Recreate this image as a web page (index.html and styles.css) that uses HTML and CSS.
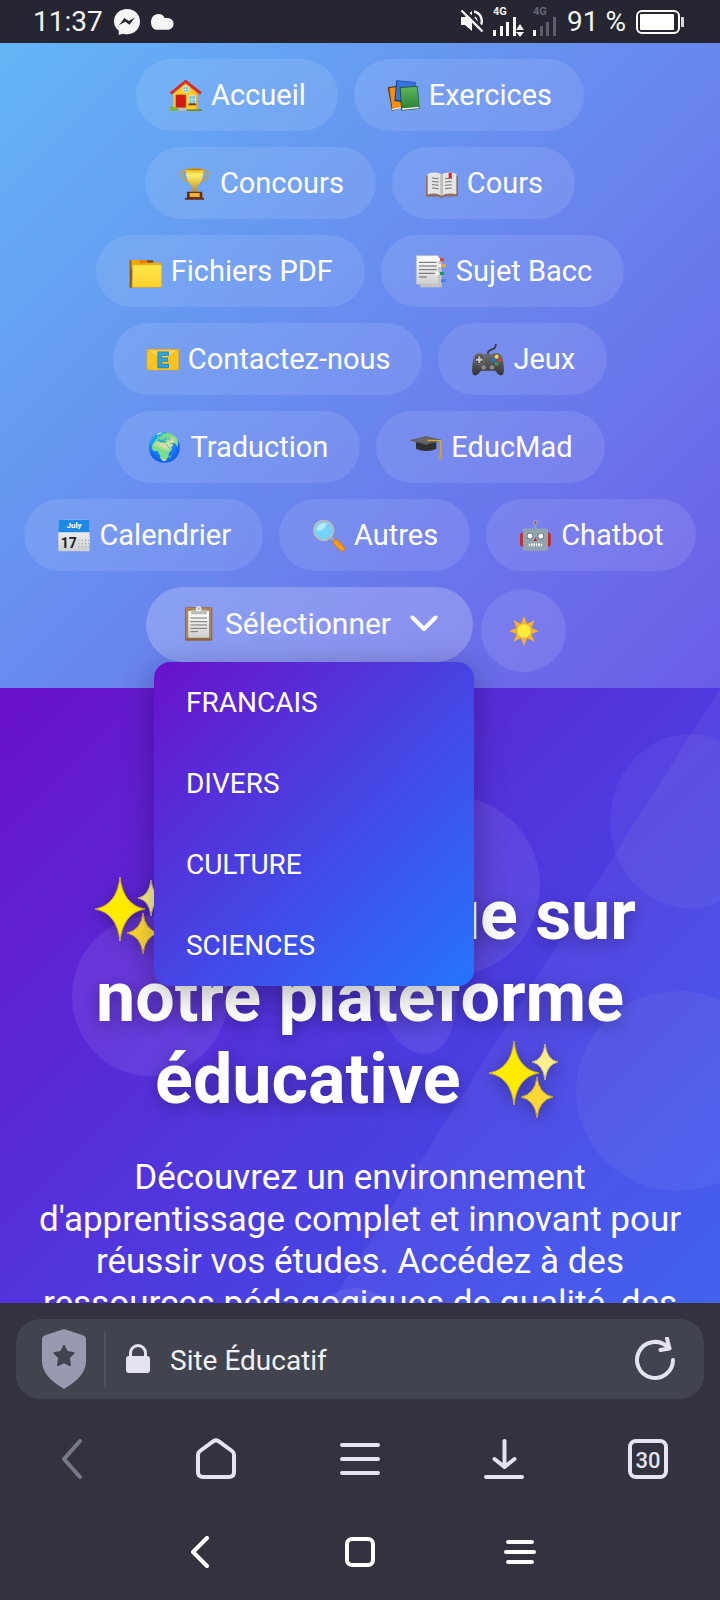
FILE: index.html
```html
<!DOCTYPE html>
<html lang="fr">
<head>
<meta charset="utf-8">
<meta name="viewport" content="width=device-width, initial-scale=1">
<title>Site Éducatif</title>
<link rel="stylesheet" href="styles.css">
</head>
<body>
<svg class="defs" width="0" height="0" aria-hidden="true">
  <defs>
    <linearGradient id="gold" x2="0" y2="1"><stop stop-color="#e3a81c"/><stop offset=".3" stop-color="#fff06a"/><stop offset="1" stop-color="#c98912"/></linearGradient>
    <linearGradient id="folder" x2="0" y2="1"><stop stop-color="#ffe94a"/><stop offset="1" stop-color="#fdd02f"/></linearGradient>
    <linearGradient id="paper" x2="0" y2="1"><stop stop-color="#fff"/><stop offset="1" stop-color="#cfcfcf"/></linearGradient>
    <linearGradient id="green" x2="0" y2="1"><stop stop-color="#5fb762"/><stop offset="1" stop-color="#2c8433"/></linearGradient>
    <linearGradient id="pad" x2="0" y2="1"><stop stop-color="#707070"/><stop offset="1" stop-color="#333"/></linearGradient>
    <g id="sparkles">
      <path fill="#ffeb00" stroke="#c9b117" stroke-width="1" d="M36 3Q39 31 61 35 39 39 36 67 33 39 11 35 33 31 36 3z"/>
      <path fill="#fdf08c" stroke="#c9b76f" stroke-width="1" d="M67 6Q69 22 80 24 69 26 67 42 65 26 54 24 65 22 67 6z"/>
      <path fill="#fdd835" stroke="#c99f2a" stroke-width="1" d="M59 39Q61 56 75 59 61 62 59 80 57 62 43 59 57 56 59 39z"/>
    </g>
  </defs>
</svg>
<div class="status">
  <div class="status-group">
    <span class="clock">11:37</span>
    <svg width="26" height="26" viewBox="0 0 26 26" aria-hidden="true"><path fill="#f5f5f5" d="M13 0C5.600 0 0 5.300 0 12.500c0 3.700 1.800 7 4.800 9.200V26l4.300-1.300c1.200.4 2.600.6 3.900.6 7.400 0 13-5.600 13-12.800S20.400 0 13 0z"/><path fill="#252632" d="M5 16l5.500-7 4.200 3 6.300-3.500-5.500 7.200-4.200-3z"/></svg>
    <svg width="24" height="16" viewBox="0 0 24 16" aria-hidden="true"><path fill="#f5f5f5" d="M7.500 0c3 0 5 1.400 6.200 4h2.200c4 0 6.600 2.300 6.600 5.800 0 3.500-2.500 6-6 6H6.200C2.600 15.800 0 13 0 8 0 3.600 3 0 7.500 0z"/></svg>
  </div>
  <div class="status-group status-right">
    <svg width="25" height="25" viewBox="0 0 25 25" aria-hidden="true"><path fill="#f5f5f5" d="M1 8h4l7-6v20l-7-6H1z"/><path fill="none" stroke="#f5f5f5" stroke-width="2.400" d="M14 2.500a9.500 9.500 0 0 1 5 16M14.500 8.500a4.500 4.500 0 0 1 1.500 6"/><path stroke="#252632" stroke-width="3" d="M3.500 0l21 21"/><path stroke="#f5f5f5" stroke-width="2.400" d="M1.500 1.500l21 21"/></svg>
    <svg width="32" height="32" viewBox="0 0 32 32" aria-hidden="true"><text class="net" x="0" y="9" fill="#f5f5f5">4G</text><g fill="#f5f5f5"><rect y="24" width="3" height="6"/><rect x="7" y="20" width="3" height="10"/><rect x="13" y="16" width="3" height="14"/><rect x="20" y="11" width="3" height="19"/><path d="M27 18l4 6h-8zM27 31l4-5h-8z"/></g></svg>
    <svg width="24" height="32" viewBox="0 0 24 32" aria-hidden="true"><text class="net" x="0" y="9" fill="#666773">4G</text><rect y="24" width="3" height="6" fill="#f5f5f5"/><g fill="#5d5e69"><rect x="7" y="20" width="3" height="10"/><rect x="13" y="16" width="3" height="14"/><rect x="20" y="11" width="3" height="19"/></g></svg>
    <span class="battery-text">91 %</span>
    <svg width="48" height="24" viewBox="0 0 48 24" aria-hidden="true"><rect x="1" y="1" width="42" height="22" rx="5" fill="none" stroke="#fff" stroke-width="2"/><rect x="4" y="4" width="34" height="16" rx="1" fill="#fff"/><path fill="#d8d8dc" d="M45 7h3v10h-3z"/></svg>
  </div>
</div>

<div class="page">
  <header class="header">
    <nav class="menu">
      <a class="pill" href="#"><svg class="icon" viewBox="0 0 105 99" aria-hidden="true"><path fill="#ffc928" d="M53 10l37 34v50H16V44z"/><path fill="#f9a825" d="M53 10l37 34v50h-6V44L53 16z"/><path fill="none" stroke="#d32f2f" stroke-width="9" stroke-linejoin="round" d="M8 44L53 7l46 37"/><path fill="#5fc3ea" stroke="#e8f5f8" stroke-width="2" d="M45 23h17v16H45zM63 50h19v25H63z"/><path stroke="#e8f5f8" stroke-width="2" d="M53 23v16M45 31h17M72 50v25M63 62h19"/><path fill="#6d3b23" d="M62 73h22v6H62z"/><path fill="#d51919" stroke="#a83214" stroke-width="2" d="M24 48h29v38H24z"/><path fill="#bbb" d="M28 86h26l6 9H28z"/><path fill="#6b8e23" d="M56 91h46v5H56z"/><path fill="#7cb342" d="M6 96V84q8-6 13 0 12-2 13 12z"/></svg>Accueil</a>
      <a class="pill" href="#"><svg class="icon" viewBox="0 0 105 99" aria-hidden="true"><path fill="#5a3a1c" d="M5 25l35-6 9 67-31 10z"/><path fill="#f98c0a" d="M10 28l27-5 9 60-27 6z"/><path fill="#eee" d="M18 89l27-6v5l-26 6z"/><path fill="#1b3a77" d="M31 4l58 5-6 65-58-8z"/><path fill="#3573dc" d="M34 5l53 5-6 59-53-7z"/><path fill="#1f5228" d="M41 25l54-4 6 68-55 6z"/><path fill="url(#green)" d="M44 27l49-4 6 60-51 5z"/><path fill="#e8eee8" d="M48 88l50-5 1 5-50 5z"/></svg>Exercices</a>
      <a class="pill" href="#"><svg class="icon" viewBox="0 0 105 99" aria-hidden="true"><path fill="none" stroke="#d29b2a" stroke-width="5" d="M28 16Q10 8 12 22q3 18 28 22M77 16q18-8 16 6-3 18-28 22"/><path fill="url(#gold)" d="M26 6q27-5 54 0-1 39-21 52v16H46V58Q27 45 26 6z"/><ellipse cx="53" cy="7" rx="26" ry="3" fill="#b98518"/><path fill="#6b2d12" d="M30 74h46v18h5v6H24v-6h6z"/><path fill="#e9b92b" d="M38 78h30v12H38z"/></svg>Concours</a>
      <a class="pill" href="#"><svg class="icon" viewBox="0 0 105 99" aria-hidden="true"><path fill="#8d6e63" d="M6 26l46 6 50-6v62l-42 1-7 5-8-5H6z"/><path fill="#e4e4e4" d="M11 20q26-8 42 2 18-10 44-2v62q-27-6-44 4-17-10-42-4z"/><path fill="#bdbdbd" d="M49 22l4 1 4-1v61l-4 3-4-3z"/><path stroke="#777" stroke-width="3" d="M24 33l20 2M24 43l20 2M24 53l20 2M24 63l20 2M63 35l20-2M63 45l20-2M63 55l20-2M63 65l20-2"/><path fill="#e51c23" d="M74 17h9v20l-4-4-5 4z"/></svg>Cours</a>
      <a class="pill" href="#"><svg class="icon" viewBox="0 0 105 99" aria-hidden="true"><path fill="#8a5a12" d="M5 16h8v82l-8 1z"/><path fill="#f2a900" d="M10 15h60l6 8h25v20H10z"/><path fill="#e87916" d="M34 16h22v9H36z"/><path fill="#7b4b22" d="M56 16h19l2 7H58z"/><path fill="url(#folder)" stroke="#d9a11c" stroke-width="2" d="M14 32q0-3 3-3h81q3 0 3 3v62q0 3-3 3H12z"/></svg>Fichiers PDF</a>
      <a class="pill" href="#"><svg class="icon" viewBox="0 0 105 99" aria-hidden="true"><path fill="#c4c4c4" d="M22 12h64v85H22z"/><path fill="url(#paper)" stroke="#bbb" stroke-width="2" d="M10 2h67v86H10z"/><path stroke="#666" stroke-width="3" d="M18 22h53M18 33h53M18 44h53M18 55h50M18 66h24"/><path fill="#fff" d="M66 9h16v10H66zM76 28h10v8H76zM66 51h14v9H66z"/><path fill="#db4437" d="M81 9h12v10H81z"/><path fill="#e0ad22" d="M84 27h15v9H84z"/><path fill="#0f9d58" d="M80 51h13v9H80z"/><path fill="#4285f4" d="M84 73h15v9H84z"/></svg>Sujet Bacc</a>
      <a class="pill" href="#"><svg class="icon" viewBox="0 0 105 99" aria-hidden="true"><rect x="6" y="19" width="95" height="62" rx="2" fill="#ffc51f" stroke="#d9a11c" stroke-width="2"/><path fill="#ffd54a" stroke="#e0a31a" stroke-width="2" d="M7 20l46 37 47-37zM7 80l34-32M100 80L65 48"/><path fill="none" stroke="#1976a8" stroke-width="13" d="M72 32H44v37h28M44 50h25"/><path fill="none" stroke="#2fa4dc" stroke-width="9" d="M71 32H44v37h27M44 50h24"/></svg>Contactez-nous</a>
      <a class="pill" href="#"><svg class="icon" viewBox="0 0 105 99" aria-hidden="true"><path fill="none" stroke="#3a3a3f" stroke-width="5" d="M54 36q-3-13 12-17 12-3 12-17"/><path fill="url(#pad)" d="M22 31q10-3 18 2h28q8-5 18-2 12 3 15 35 3 31-7 31-9 0-18-14H33Q23 97 14 97 4 97 7 66q3-32 15-35z"/><circle cx="28" cy="50" r="15" fill="#4a4a4a" stroke="#888" stroke-width="2"/><path stroke="#c8c8c8" stroke-width="6" d="M28 40v20M18 50h20"/><circle cx="41" cy="73" r="8" fill="#8a8a8a" stroke="#444" stroke-width="2"/><circle cx="66" cy="73" r="8" fill="#8a8a8a" stroke="#444" stroke-width="2"/><circle cx="80" cy="41" r="6" fill="#ffd54f"/><circle cx="70" cy="52" r="6" fill="#1e78c8"/><circle cx="90" cy="51" r="6" fill="#d63a3a"/><circle cx="80" cy="62" r="6" fill="#2e9b45"/></svg>Jeux</a>
      <a class="pill" href="#"><span class="emoji">🌍</span>Traduction</a>
      <a class="pill" href="#"><svg class="icon" viewBox="0 0 105 99" aria-hidden="true"><path fill="#303030" d="M24 34h61v20q-30 12-61 0z"/><path fill="#4c4c4c" d="M6 28l48-12 47 11-46 16z"/><path fill="#666" d="M6 28l48-12 47 11-46 12z"/><path fill="none" stroke="#e0a52c" stroke-width="4" d="M58 28l40 1v40"/><path fill="#d49a22" d="M95 62h6v23h-9z"/></svg>EducMad</a>
      <a class="pill" href="#"><svg class="icon" viewBox="0 0 105 99" aria-hidden="true"><rect x="7" y="2" width="94" height="95" rx="4" fill="url(#paper)"/><path fill="#1e88e5" d="M7 5q0-3 3-3h88q3 0 3 3v35H7z"/><text class="month" x="54" y="28">July</text><text class="day" x="38" y="87">17</text><path fill="none" stroke="#888" stroke-width="3" stroke-dasharray="3 7" d="M67 64h32M67 74h32M67 84h32"/></svg>Calendrier</a>
      <a class="pill" href="#"><svg class="icon" viewBox="0 0 105 99" aria-hidden="true"><path stroke="#a8a8a8" stroke-width="8" d="M60 56l12 11"/><path stroke="#d97a08" stroke-width="17" stroke-linecap="round" d="M74 69l19 20"/><path stroke="#ff9d12" stroke-width="12" stroke-linecap="round" d="M74 69l19 20"/><circle cx="38" cy="34" r="29" fill="#74d3fb" stroke="#b4bcc0" stroke-width="6"/><path fill="#b5e8ff" d="M17 35a22 22 0 0 1 30-22Q40 38 17 35z"/></svg>Autres</a>
      <a class="pill" href="#"><span class="emoji">🤖</span>Chatbot</a>
      <div class="tools">
        <div class="picker">
          <button class="picker-button" type="button" aria-expanded="true"><svg width="37" height="35" viewBox="0 0 111 105" aria-hidden="true"><rect x="15" y="4" width="82" height="100" rx="4" fill="#8d6540"/><rect x="18" y="5" width="76" height="92" rx="3" fill="#b18552"/><path fill="url(#paper)" d="M25 15h62v80H25z"/><path fill="#bdbdbd" d="M33 12h12l4-6q7-9 14 0l4 6h14v13H33z"/><circle cx="56" cy="8" r="6" fill="none" stroke="#eee" stroke-width="4"/><path stroke="#777" stroke-width="3" d="M31 36h50M31 47h50M31 57h50M31 67h50M31 77h23"/></svg>Sélectionner<svg class="chevron" width="28" height="17" viewBox="0 0 28 17" aria-hidden="true"><path fill="none" stroke="#fff" stroke-width="4" stroke-linecap="round" stroke-linejoin="round" d="M2.500 2.500L14 14 25.500 2.500"/></svg></button>
          <div class="dropdown">
            <a class="dropdown-item" href="#">FRANCAIS</a>
            <a class="dropdown-item" href="#">DIVERS</a>
            <a class="dropdown-item" href="#">CULTURE</a>
            <a class="dropdown-item" href="#">SCIENCES</a>
          </div>
        </div>
        <button class="theme" type="button" aria-label="Thème"><svg width="30" height="30" viewBox="-45 -45 90 90"><path fill="#f4b02e" d="M0-45L9-22 32-32 22-9 45 0 22 9 32 32 9 22 0 45-9 22-32 32-22 9-45 0-22-9-32-32-9-22z"/><circle r="21" fill="#ffeb3b" stroke="#f6b62c" stroke-width="2"/></svg></button>
      </div>
    </nav>
  </header>
  <main class="hero">
    <svg class="shapes" viewBox="0 0 720 615" preserveAspectRatio="xMidYMin slice" aria-hidden="true">
      <g fill="#fff" fill-opacity=".05"><path d="M720 0L331 615h389z"/><ellipse cx="690" cy="133" rx="80" ry="87"/><ellipse cx="678" cy="403" rx="102" ry="100"/></g>
      <g fill="#fff" fill-opacity=".08"><circle cx="450" cy="198" r="90"/><ellipse cx="150" cy="308" rx="78" ry="80"/><path d="M405 240c-25 5-40 30-34 60 7 34 32 66 53 66 22 0 33-28 33-60s-18-73-52-66z"/><circle cx="355" cy="644" r="44"/></g>
    </svg>
    <h1 class="title"><svg class="sparkles" viewBox="0 0 87 82" aria-hidden="true"><use href="#sparkles"/></svg> Bienvenue sur notre plateforme éducative <svg class="sparkles" viewBox="0 0 87 82" aria-hidden="true"><use href="#sparkles"/></svg></h1>
    <p class="lead">Découvrez un environnement d'apprentissage complet et innovant pour réussir vos études. Accédez à des ressources pédagogiques de qualité, des</p>
  </main>
</div>

<footer class="browser">
  <div class="address">
    <button class="icon-button" type="button" aria-label="Protection"><svg width="44" height="60" viewBox="0 0 44 60"><path fill="#989baf" d="M22 0l19.500 6.500Q44 7.500 44 10v22c0 12-9 20-22 28C9 52 0 44 0 32V10q0-2.500 2.500-3.500z"/><path fill="#41434f" stroke="#41434f" stroke-width="2" stroke-linejoin="round" d="M22 17l3 6 6.500 1-4.700 4.700 1.200 7.300-6-3-6 3 1.200-7.300-4.700-4.700 6.500-1z"/></svg></button>
    <span class="divider"></span>
    <svg width="24" height="30" viewBox="0 0 24 30" aria-hidden="true"><rect y="12" width="24" height="17" rx="3" fill="#e3e4ef"/><path fill="none" stroke="#e3e4ef" stroke-width="3" d="M4.500 13V9a7.500 7.500 0 0 1 15 0v4"/></svg>
    <input class="url" type="text" value="Site Éducatif" aria-label="Adresse" readonly>
    <button class="icon-button" type="button" aria-label="Actualiser"><svg width="42" height="44" viewBox="0 0 42 44"><path fill="none" stroke="#e3e4ef" stroke-width="4" stroke-linecap="round" stroke-linejoin="round" d="M39 23A18 18 0 1 1 33 9.500L35.500 11M33 1.500l2.500 10-9 1.500"/></svg></button>
  </div>
  <div class="toolbar">
    <button class="icon-button" type="button" aria-label="Précédent"><svg width="20" height="40" viewBox="0 0 20 40"><path fill="none" stroke="#777989" stroke-width="4" stroke-linecap="round" stroke-linejoin="round" d="M18 2L2 20l16 18"/></svg></button>
    <button class="icon-button" type="button" aria-label="Accueil"><svg width="40" height="42" viewBox="0 0 40 42"><path fill="none" stroke="#e3e4ef" stroke-width="4" stroke-linejoin="round" d="M17.500 3.200q2.500-1.700 5 0L36 13q2 1.500 2 4v17q0 5-5 5H7q-5 0-5-5V17q0-2.500 2-4z"/></svg></button>
    <button class="icon-button" type="button" aria-label="Menu"><svg width="40" height="32" viewBox="0 0 40 32"><path stroke="#e3e4ef" stroke-width="4" stroke-linecap="round" d="M2 2h36M2 16h36M2 30h36"/></svg></button>
    <button class="icon-button" type="button" aria-label="Téléchargements"><svg width="40" height="40" viewBox="0 0 40 40"><path fill="none" stroke="#e3e4ef" stroke-width="4" stroke-linecap="round" stroke-linejoin="round" d="M20.500 2v26M10.500 20l10 8 10-8M2 38h36"/></svg></button>
    <button class="tabs" type="button" aria-label="Onglets">30</button>
  </div>
  <div class="system">
    <button class="icon-button" type="button" aria-label="Retour"><svg width="18" height="32" viewBox="0 0 18 32"><path fill="none" stroke="#fff" stroke-width="4" stroke-linecap="round" stroke-linejoin="round" d="M16 2L2 16l14 14"/></svg></button>
    <button class="icon-button" type="button" aria-label="Écran d'accueil"><svg width="30" height="30" viewBox="0 0 30 30"><rect x="2" y="2" width="26" height="26" rx="5" fill="none" stroke="#fff" stroke-width="4"/></svg></button>
    <button class="icon-button" type="button" aria-label="Applications"><svg width="32" height="24" viewBox="0 0 32 24"><path stroke="#fff" stroke-width="4" stroke-linecap="round" d="M4 2h24M2 12h28M4 22h24"/></svg></button>
  </div>
</footer>
</body>
</html>
```
FILE: styles.css
```css
* { box-sizing: border-box; }

body {
  margin: 0;
  height: 100vh;
  display: flex;
  flex-direction: column;
  overflow: hidden;
  background: #32333f;
  color: #fff;
  font-family: Roboto, "Noto Color Emoji", sans-serif;
  font-size: 28px;
}

a { color: inherit; text-decoration: none; }

button {
  border: 0;
  padding: 0;
  background: none;
  color: inherit;
  font: inherit;
}

svg { display: block; flex: none; }

.defs { position: absolute; }

.status {
  height: 43px;
  flex: none;
  display: flex;
  align-items: center;
  justify-content: space-between;
  padding: 0 36px 0 33px;
  background: #252632;
  color: #f5f5f5;
}

.status-group { display: flex; align-items: center; gap: 11px; }
.status-right { gap: 8px; }
.battery-text { margin: 0 2px; }
.net { font: 700 11px Roboto, sans-serif; }

.page {
  flex: 1;
  min-height: 0;
  display: flex;
  flex-direction: column;
  overflow: hidden;
}

.header {
  position: relative;
  z-index: 1;
  flex: none;
  padding: 16px 20px;
  background: linear-gradient(135deg, #64b5f6, #6c5ce7);
}

.menu {
  display: flex;
  flex-wrap: wrap;
  justify-content: center;
  gap: 16px;
}

.pill {
  height: 72px;
  display: flex;
  align-items: center;
  gap: 8px;
  padding: 0 32px;
  border-radius: 36px;
  background: rgba(255, 255, 255, .1);
  font-size: 29px;
}

.icon { width: 35px; height: 33px; }

.emoji {
  width: 35px;
  display: flex;
  justify-content: center;
  font-size: 28px;
}

.month { font: 700 24px Roboto, sans-serif; fill: #fff; text-anchor: middle; }
.day { font: 700 42px Roboto, sans-serif; fill: #222; text-anchor: middle; }

.tools {
  display: flex;
  align-items: flex-start;
  gap: 8px;
  padding-right: 8px;
}

.picker { position: relative; }

.picker-button {
  height: 75px;
  display: flex;
  align-items: center;
  gap: 8px;
  padding: 0 35px 2px 34px;
  border-radius: 38px;
  background: rgba(255, 255, 255, .22);
  font-size: 30px;
}

.chevron { margin-left: 11px; }

.dropdown {
  position: absolute;
  top: 100%;
  left: 8px;
  width: 320px;
  border-radius: 16px;
  background: linear-gradient(135deg, #6a11cb, #2575fc);
  box-shadow: 0 8px 32px rgba(0, 0, 0, .3);
}

.dropdown-item {
  height: 81px;
  display: flex;
  align-items: center;
  padding: 0 32px;
}

.theme {
  width: 85px;
  height: 83px;
  display: flex;
  align-items: center;
  justify-content: center;
  margin-top: 2px;
  border-radius: 50%;
  background: rgba(255, 255, 255, .1);
}

.hero {
  position: relative;
  flex: 1;
  min-height: 0;
  padding: 186px 32px 0;
  overflow: hidden;
  text-align: center;
  background: linear-gradient(135deg, #6a11cb, #2575fc) 0 0 / 100% 1100px;
}

.shapes {
  position: absolute;
  top: 0;
  left: 0;
  width: 100%;
  height: 100%;
}

.title {
  position: relative;
  margin: 0 0 37px;
  font-size: 70px;
  font-weight: 700;
  line-height: 82px;
  text-shadow: 0 4px 16px rgba(0, 0, 0, .3);
}

.sparkles {
  display: inline-block;
  width: 87px;
  height: 82px;
  vertical-align: top;
  overflow: visible;
  filter: drop-shadow(0 4px 8px rgba(0, 0, 0, .3));
}

.lead {
  position: relative;
  margin: 0;
  font-size: 35px;
  line-height: 42px;
}

.browser { flex: none; padding: 16px 0 15px; }

.icon-button { display: flex; align-items: center; justify-content: center; }

.address {
  height: 80px;
  display: flex;
  align-items: center;
  margin: 0 16px;
  padding: 0 28px 0 26px;
  border-radius: 24px;
  background: #41434f;
}

.divider {
  width: 2px;
  height: 56px;
  margin: 0 20px 0 18px;
  background: #4f515e;
}

.url {
  flex: 1;
  min-width: 0;
  margin-left: 20px;
  padding: 3px 0 0;
  border: 0;
  outline: 0;
  background: none;
  color: #f0f0f8;
  font: 28px Roboto, sans-serif;
}

.toolbar {
  height: 120px;
  display: grid;
  grid-template-columns: repeat(5, 1fr);
  place-items: center;
}

.tabs {
  width: 40px;
  height: 40px;
  border: 4px solid #e3e4ef;
  border-radius: 8px;
  color: #e3e4ef;
  font-size: 22px;
  font-weight: 500;
  line-height: 36px;
}

.system {
  height: 66px;
  display: grid;
  grid-template-columns: repeat(3, 160px);
  justify-content: center;
  place-items: center;
}
```
